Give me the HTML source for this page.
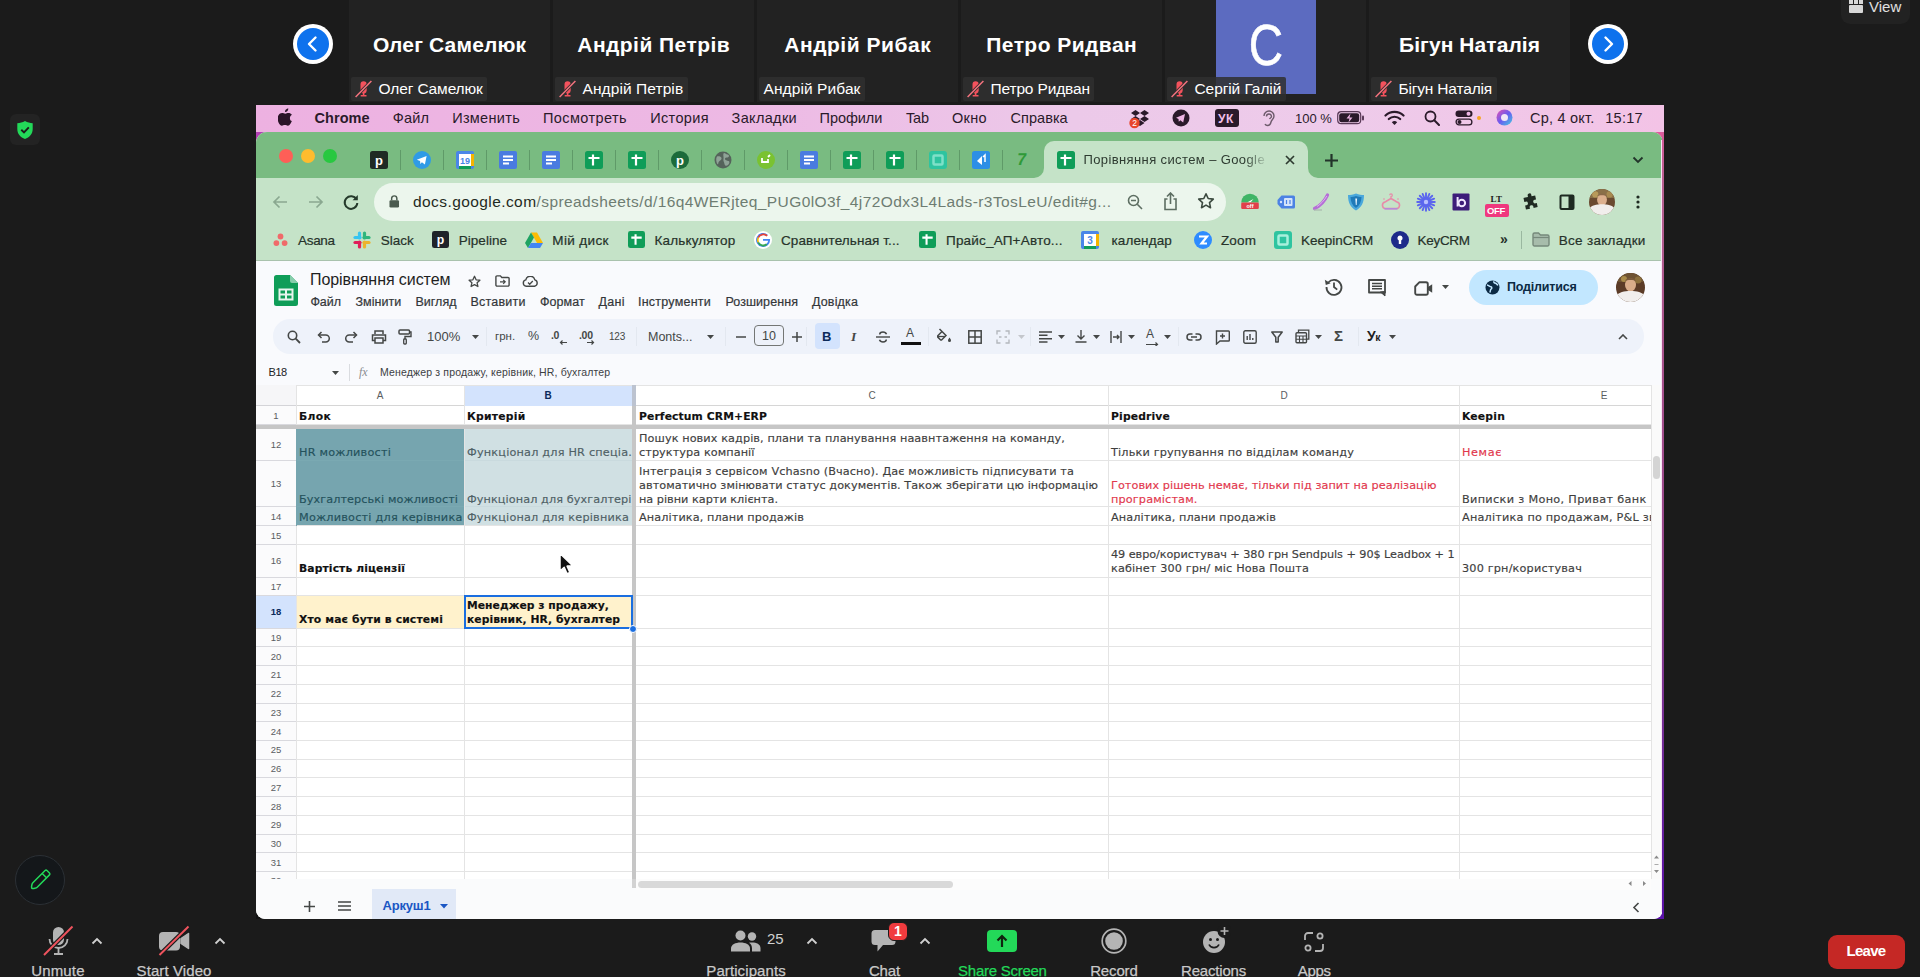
<!DOCTYPE html><html lang="uk"><head><meta charset="utf-8"><title>Zoom Meeting</title><style>

*{box-sizing:border-box;margin:0;padding:0}
html,body{width:1920px;height:977px;overflow:hidden;background:#1b1b1b}
body{position:relative;font-family:"Liberation Sans",sans-serif;color:#fff}
.a{position:absolute}
.t{position:absolute;white-space:nowrap;line-height:1}
.tile{position:absolute;top:0;height:102px;width:201px;background:#222}
.tile .big{position:absolute;left:0;right:0;top:33px;text-align:center;font-weight:bold;font-size:21px;line-height:24px;color:#fff;white-space:nowrap}
.tile .lbl{position:absolute;left:1.5px;top:77px;height:24px;background:rgba(48,48,48,.86);color:#fff;font-size:15.500px;line-height:24px;padding:0 4.500px 0 28px;white-space:nowrap;border-radius:2px}
.tile .lbl.nomic{padding-left:5px}
.tile .lbl svg{position:absolute;left:4px;top:2px}
.navb{position:absolute;width:40px;height:40px;border-radius:50%;background:#fff}
.navb i{position:absolute;left:4px;top:4px;width:32px;height:32px;border-radius:50%;background:#0e72ed;display:block}
.navb svg{position:absolute;left:4px;top:4px}
.c{font-family:"DejaVu Sans","Liberation Sans",sans-serif;-webkit-text-stroke:.15px currentColor}
.zl{position:absolute;white-space:nowrap;font-size:15px;line-height:18px;color:#c9c9c9;text-align:center;-webkit-text-stroke:.25px currentColor}

</style></head><body>
<div class="tile" style="left:349px">
<div class="big" style="letter-spacing:0.152px"><span style="margin-right:-0.152px">Олег Самелюк</span></div>
<div class="lbl" style="letter-spacing:-0.126px"><svg width="18" height="19" viewBox="0 0 18 19"><path d="M8.600 2.300a3.100 3.100 0 0 1 3.100 3.100v6.200a3.100 3.100 0 0 1-2.300 3v1.500h2.100v1.300H5.700v-1.300h2.100v-1.500a3.100 3.100 0 0 1-2.300-3V5.400a3.100 3.100 0 0 1 3.100-3.100z" fill="#f4525d"/><path d="M.6 18L16.400 2" stroke="#2e2e2e" stroke-width="3.200"/><path d="M.6 18L16.400 2" stroke="#f4737e" stroke-width="1.500"/></svg>Олег Самелюк</div>
</div>
<div class="tile" style="left:553px">
<div class="big" style="letter-spacing:0.451px"><span style="margin-right:-0.451px">Андрій Петрів</span></div>
<div class="lbl" style="letter-spacing:0.083px"><svg width="18" height="19" viewBox="0 0 18 19"><path d="M8.600 2.300a3.100 3.100 0 0 1 3.100 3.100v6.200a3.100 3.100 0 0 1-2.300 3v1.500h2.100v1.300H5.700v-1.300h2.100v-1.500a3.100 3.100 0 0 1-2.300-3V5.400a3.100 3.100 0 0 1 3.100-3.100z" fill="#f4525d"/><path d="M.6 18L16.400 2" stroke="#2e2e2e" stroke-width="3.200"/><path d="M.6 18L16.400 2" stroke="#f4737e" stroke-width="1.500"/></svg>Андрій Петрів</div>
</div>
<div class="tile" style="left:757px">
<div class="big" style="letter-spacing:0.528px"><span style="margin-right:-0.528px">Андрій Рибак</span></div>
<div class="lbl nomic" style="letter-spacing:0.092px">Андрій Рибак</div>
</div>
<div class="tile" style="left:961px">
<div class="big" style="letter-spacing:0.457px"><span style="margin-right:-0.457px">Петро Ридван</span></div>
<div class="lbl" style="letter-spacing:-0.156px"><svg width="18" height="19" viewBox="0 0 18 19"><path d="M8.600 2.300a3.100 3.100 0 0 1 3.100 3.100v6.200a3.100 3.100 0 0 1-2.300 3v1.500h2.100v1.300H5.700v-1.300h2.100v-1.500a3.100 3.100 0 0 1-2.300-3V5.400a3.100 3.100 0 0 1 3.100-3.100z" fill="#f4525d"/><path d="M.6 18L16.400 2" stroke="#2e2e2e" stroke-width="3.200"/><path d="M.6 18L16.400 2" stroke="#f4737e" stroke-width="1.500"/></svg>Петро Ридван</div>
</div>
<div class="tile" style="left:1165px">
<div class="a" style="left:51px;top:0;width:100px;height:94px;background:#5c6bc0"></div>
<div class="t" style="left:51px;width:100px;top:13px;text-align:center;font-size:58px;line-height:64px;color:#fff;transform:scaleX(.82);-webkit-text-stroke:.6px #fff">С</div>
<div class="lbl" style="letter-spacing:-0.082px"><svg width="18" height="19" viewBox="0 0 18 19"><path d="M8.600 2.300a3.100 3.100 0 0 1 3.100 3.100v6.200a3.100 3.100 0 0 1-2.300 3v1.500h2.100v1.300H5.700v-1.300h2.100v-1.500a3.100 3.100 0 0 1-2.300-3V5.400a3.100 3.100 0 0 1 3.100-3.100z" fill="#f4525d"/><path d="M.6 18L16.400 2" stroke="#2e2e2e" stroke-width="3.200"/><path d="M.6 18L16.400 2" stroke="#f4737e" stroke-width="1.500"/></svg>Сергій Галій</div>
</div>
<div class="tile" style="left:1369px">
<div class="big" style="letter-spacing:0.069px"><span style="margin-right:-0.069px">Бігун Наталія</span></div>
<div class="lbl" style="letter-spacing:-0.176px"><svg width="18" height="19" viewBox="0 0 18 19"><path d="M8.600 2.300a3.100 3.100 0 0 1 3.100 3.100v6.200a3.100 3.100 0 0 1-2.300 3v1.500h2.100v1.300H5.700v-1.300h2.100v-1.500a3.100 3.100 0 0 1-2.300-3V5.400a3.100 3.100 0 0 1 3.100-3.100z" fill="#f4525d"/><path d="M.6 18L16.400 2" stroke="#2e2e2e" stroke-width="3.200"/><path d="M.6 18L16.400 2" stroke="#f4737e" stroke-width="1.500"/></svg>Бігун Наталія</div>
</div>
<div class="navb" style="left:293px;top:24px"><i></i><svg width="32" height="32" viewBox="0 0 32 32"><path d="M18.5 9.5L12 16l6.5 6.5" fill="none" stroke="#fff" stroke-width="2.4" stroke-linecap="round" stroke-linejoin="round"/></svg></div>
<div class="navb" style="left:1588px;top:24px"><i></i><svg width="32" height="32" viewBox="0 0 32 32"><path d="M13.5 9.5L20 16l-6.5 6.5" fill="none" stroke="#fff" stroke-width="2.4" stroke-linecap="round" stroke-linejoin="round"/></svg></div>
<div class="a" style="left:1841px;top:-8px;width:69px;height:32px;border-radius:9px;background:#222"></div>
<svg class="a" style="left:1849px;top:0" width="14" height="14" viewBox="0 0 14 14"><rect x="0" y="5" width="14" height="8" rx="1" fill="#d8d8d8"/><rect x="0" y="0" width="4" height="4" fill="#d8d8d8"/><rect x="5" y="0" width="4" height="4" fill="#d8d8d8"/><rect x="10" y="0" width="4" height="4" fill="#d8d8d8"/></svg>
<div class="t" style="left:1869px;top:-2px;font-size:15px;line-height:18px;color:#e0e0e0">View</div>
<div class="a" style="left:10px;top:114px;width:30px;height:31px;border-radius:6px;background:#232323"></div>
<svg class="a" style="left:16px;top:120px" width="18" height="20" viewBox="0 0 18 20"><path d="M9 1C6.5 2.6 4 3 1.3 3.2V9c0 5 3.3 8.3 7.7 10 4.400-1.700 7.700-5 7.700-10V3.2C14 3 11.500 2.600 9 1z" fill="#23d959"/><path d="M5.300 9.800l2.700 2.600 4.800-5" fill="none" stroke="#1b1b1b" stroke-width="1.900"/></svg>
<div class="a" style="left:15px;top:855px;width:50px;height:50px;border-radius:50%;background:#14171a;border:1px solid #2b3035"></div>
<svg class="a" style="left:26px;top:866px" width="28" height="28" viewBox="0 0 28 28"><g transform="translate(14 14) scale(.88) rotate(45) translate(-14 -14)" fill="none" stroke="#23d959" stroke-width="1.700" stroke-linejoin="round"><path d="M12 .8h4a1.500 1.500 0 0 1 1.500 1.500V22c0 1.200-1.700 4.500-3.500 5.200-1.800-.7-3.500-4-3.500-5.200V2.300A1.500 1.500 0 0 1 12 .8z"/><path d="M10.500 7h7"/></g></svg>
<div class="a" style="left:256px;top:105px;width:1408px;height:814px;background:#121212"></div><div class="a" style="left:1650px;top:905px;width:14px;height:14px;background:#5a12a8"></div>
<div class="a" style="left:256px;top:130px;width:1408px;height:30px;background:linear-gradient(90deg,#b23fb4 0,#b23fb4 40px,#c86cb4 60%,#de5a9c 100%)"></div>
<div class="a" style="left:256px;top:105px;width:1408px;height:27px;background:linear-gradient(90deg,#edb1e1 0%,#edb9e4 35%,#ecc9e9 58%,#eecbea 78%,#f3c3e6 100%)"></div>
<svg class="a" style="left:278px;top:108px" width="15" height="18" viewBox="0 0 15 18"><path d="M10.300 0.400c.1 1-.3 1.900-.9 2.600-.6.700-1.500 1.200-2.400 1.100-.1-.9.300-1.900.9-2.500.6-.7 1.600-1.200 2.400-1.200zM13.900 13.100c-.4.900-.6 1.300-1.100 2.100-.7 1.100-1.700 2.500-3 2.500-1.100 0-1.400-.7-2.900-.7s-1.900.7-3 .7c-1.300 0-2.200-1.200-2.900-2.300C-.6 12.500-.8 9 .5 7.200 1.300 5.900 2.700 5.100 4 5.100c1.300 0 2.200.7 3.300.7 1.100 0 1.700-.7 3.300-.7 1.200 0 2.400.6 3.300 1.700-2.900 1.600-2.400 5.700 0 6.300z" fill="#2a1428"/></svg>
<div class="t" style="left:314.5px;top:108.5px;font-size:14.5px;line-height:18.5px;color:#2a1a2a;font-weight:bold;letter-spacing:0.069px;">Chrome</div>
<div class="t" style="left:392.8px;top:108.5px;font-size:14.5px;line-height:18.5px;color:#2a1a2a;letter-spacing:0.138px;">Файл</div>
<div class="t" style="left:452.2px;top:108.5px;font-size:14.5px;line-height:18.5px;color:#2a1a2a;letter-spacing:0.299px;">Изменить</div>
<div class="t" style="left:543px;top:108.5px;font-size:14.5px;line-height:18.5px;color:#2a1a2a;letter-spacing:0.407px;">Посмотреть</div>
<div class="t" style="left:650.2px;top:108.5px;font-size:14.5px;line-height:18.5px;color:#2a1a2a;letter-spacing:0.367px;">История</div>
<div class="t" style="left:731.6px;top:108.5px;font-size:14.5px;line-height:18.5px;color:#2a1a2a;letter-spacing:0.330px;">Закладки</div>
<div class="t" style="left:819.6px;top:108.5px;font-size:14.5px;line-height:18.5px;color:#2a1a2a;letter-spacing:-0.063px;">Профили</div>
<div class="t" style="left:906px;top:108.5px;font-size:14.5px;line-height:18.5px;color:#2a1a2a;letter-spacing:-0.193px;">Tab</div>
<div class="t" style="left:952px;top:108.5px;font-size:14.5px;line-height:18.5px;color:#2a1a2a;letter-spacing:0.276px;">Окно</div>
<div class="t" style="left:1010.5px;top:108.5px;font-size:14.5px;line-height:18.5px;color:#2a1a2a;letter-spacing:0.046px;">Справка</div>
<svg class="a" style="left:1129px;top:109px" width="22" height="20" viewBox="0 0 22 20"><g fill="#2a1a2a"><path d="M6.500 1L2 4l4.500 3L11 4zM15.500 1L11 4l4.500 3L20 4zM2 10l4.500 3L11 10 6.500 7zM15.500 7L11 10l4.500 3L20 10zM6.500 14l4.500 3 4.500-3L11 11z"/></g><circle cx="5.500" cy="14" r="5.200" fill="#e8452c"/><text x="5.500" y="17" font-size="8.500" text-anchor="middle" fill="#fff" font-family="Liberation Sans,sans-serif">2</text></svg>
<svg class="a" style="left:1172px;top:109px" width="18" height="18" viewBox="0 0 18 18"><circle cx="9" cy="9" r="8.500" fill="#2a1a2a"/><path d="M4 8.800l9-3.800-1.800 8.500-2.900-2.300-1.500 1.600-.3-2.700z" fill="#eeb6e4"/></svg>
<div class="a" style="left:1215px;top:109px;width:24px;height:18px;border-radius:3px;background:#2a1a2a"></div>
<div class="t" style="left:1218px;top:111px;font-size:12px;line-height:16px;color:#f0bfe8;font-weight:bold;letter-spacing:.5px;">УК</div>
<svg class="a" style="left:1262px;top:108px" width="14" height="20" viewBox="0 0 14 20"><path d="M2 8a5 5 0 0 1 10 0c0 3-2.500 3.500-3 6-.4 2-1.500 3.500-3.500 3.500-1 0-2-.5-2.500-1.500M4.500 8.500a2.500 2.500 0 0 1 5 0c0 1.300-1.500 1.500-2 2.500" fill="none" stroke="#6d5a6b" stroke-width="1.400"/></svg>
<div class="t" style="left:1295px;top:110px;font-size:13px;line-height:17px;color:#2a1a2a;">100 %</div>
<svg class="a" style="left:1337px;top:111px" width="28" height="14" viewBox="0 0 28 14"><rect x="0.700" y="0.700" width="23" height="12" rx="3.500" fill="none" stroke="#5a3a58" stroke-width="1.200"/><rect x="2.200" y="2.200" width="20" height="9" rx="2.200" fill="#2a1a2a"/><path d="M13.500 2.500l-4 5h3l-1 4 4-5h-3z" fill="#eeb6e4"/><rect x="25" y="4.500" width="2" height="5" rx="1" fill="#5a3a58"/></svg>
<svg class="a" style="left:1384px;top:110px" width="21" height="16" viewBox="0 0 21 16"><g fill="none" stroke="#2a1a2a" stroke-width="2.200" stroke-linecap="round"><path d="M1.500 5.500a13 13 0 0 1 18 0"/><path d="M4.800 9a8.300 8.300 0 0 1 11.400 0"/></g><path d="M7.800 12.200a4 4 0 0 1 5.400 0L10.500 15z" fill="#2a1a2a"/></svg>
<svg class="a" style="left:1424px;top:110px" width="16" height="16" viewBox="0 0 16 16"><circle cx="6.500" cy="6.500" r="5" fill="none" stroke="#2a1a2a" stroke-width="1.800"/><path d="M10.300 10.300L15 15" stroke="#2a1a2a" stroke-width="2" stroke-linecap="round"/></svg>
<svg class="a" style="left:1455px;top:110px" width="18" height="16" viewBox="0 0 18 16"><rect x="0.500" y="0.500" width="17" height="6.500" rx="3.200" fill="#2a1a2a"/><circle cx="13.500" cy="3.800" r="2" fill="#eeb6e4"/><rect x="1.100" y="9.100" width="15.800" height="5.800" rx="2.900" fill="none" stroke="#2a1a2a" stroke-width="1.300"/><circle cx="4.500" cy="12" r="2" fill="#2a1a2a"/></svg>
<div class="a" style="left:1477px;top:116px;width:4px;height:4px;border-radius:50%;background:#f5a623"></div>
<svg class="a" style="left:1496px;top:109px" width="17" height="17" viewBox="0 0 17 17"><defs><linearGradient id="sg" x1="0" y1="0" x2="1" y2="1"><stop offset="0" stop-color="#e84fb0"/><stop offset=".5" stop-color="#6a5cf0"/><stop offset="1" stop-color="#3fd0e0"/></linearGradient></defs><circle cx="8.500" cy="8.500" r="8" fill="url(#sg)"/><circle cx="8.500" cy="8.500" r="3.500" fill="#f3e6f6"/></svg>
<div class="t" style="left:1530px;top:108.5px;font-size:14.5px;line-height:18.5px;color:#2a1a2a;letter-spacing:0.208px;">Ср, 4 окт.</div>
<div class="t" style="left:1605.3px;top:108.5px;font-size:14.5px;line-height:18.5px;color:#2a1a2a;letter-spacing:0.263px;">15:17</div>
<div class="a" style="left:256px;top:132px;width:1407px;height:787px;border-radius:11px 11px 9px 9px;background:#f9fafd;overflow:hidden"><div class="a" style="left:0;top:0;width:1407px;height:47px;background:#79bb81"></div><div class="a" style="left:0;top:46px;width:1407px;height:83px;background:#c5e3c8;border-bottom:1px solid #a9c2ad"></div></div>
<div class="a" style="left:279px;top:149px;width:14px;height:14px;border-radius:50%;background:#fe5f57"></div>
<div class="a" style="left:301px;top:149px;width:14px;height:14px;border-radius:50%;background:#febc2e"></div>
<div class="a" style="left:323px;top:149px;width:14px;height:14px;border-radius:50%;background:#28c840"></div>
<svg class="a" style="left:370px;top:151px" width="18" height="18" viewBox="0 0 18 18"><rect width="18" height="18" rx="2.500" fill="#1f2a24"/><text x="9" y="13.500" text-anchor="middle" font-family="Liberation Sans,sans-serif" font-weight="bold" font-size="13" fill="#fff">p</text></svg>
<svg class="a" style="left:413px;top:151px" width="18" height="18" viewBox="0 0 18 18"><circle cx="9" cy="9" r="9" fill="#2f9be6"/><path d="M3.800 8.800l9.800-3.900-1.700 8.700-3-2.300-1.600 1.600-.2-2.800z" fill="#fff"/></svg>
<svg class="a" style="left:456px;top:151px" width="18" height="18" viewBox="0 0 18 18"><rect width="18" height="18" rx="2" fill="#4a86e8"/><rect x="3" y="3" width="12" height="12" fill="#fff"/><rect x="15" y="3" width="3" height="12" fill="#f4b400"/><rect x="3" y="15" width="12" height="3" fill="#0f9d58"/><text x="9" y="13" font-size="9" font-weight="bold" text-anchor="middle" fill="#4a86e8" font-family="Liberation Sans,sans-serif">19</text></svg>
<svg class="a" style="left:499px;top:151px" width="18" height="18" viewBox="0 0 18 18"><rect width="18" height="18" rx="2" fill="#4a7be0"/><path d="M4 5.500h10M4 9h10M4 12.500h6" stroke="#fff" stroke-width="1.800"/></svg>
<svg class="a" style="left:542px;top:151px" width="18" height="18" viewBox="0 0 18 18"><rect width="18" height="18" rx="2" fill="#4a7be0"/><path d="M4 5.500h10M4 9h10M4 12.500h6" stroke="#fff" stroke-width="1.800"/></svg>
<svg class="a" style="left:585px;top:151px" width="18" height="18" viewBox="0 0 18 18"><rect width="18" height="18" rx="2.500" fill="#0f9d58"/><path d="M3.500 7h11M8 3.500v11" stroke="#fff" stroke-width="2.200"/></svg>
<svg class="a" style="left:628px;top:151px" width="18" height="18" viewBox="0 0 18 18"><rect width="18" height="18" rx="2.500" fill="#0f9d58"/><path d="M3.500 7h11M8 3.500v11" stroke="#fff" stroke-width="2.200"/></svg>
<svg class="a" style="left:671px;top:151px" width="18" height="18" viewBox="0 0 18 18"><circle cx="9" cy="9" r="9" fill="#1c6b3a"/><text x="9" y="13.500" text-anchor="middle" font-family="Liberation Sans,sans-serif" font-weight="bold" font-size="13" fill="#fff">p</text></svg>
<svg class="a" style="left:714px;top:151px" width="18" height="18" viewBox="0 0 18 18"><circle cx="9" cy="9" r="8.500" fill="#55635b"/><path d="M3 5.500c2-.5 4 0 4.500 1.500S6 9.500 5 10.500 4.500 14 3.500 13 1.500 8 3 5.500zM10 2c1.500 0 2 1.500 3.500 1.500s2 1.500 1 2.500-3 0-3.500 1.500S13.500 10 14.500 10s1.500 2 0 3.500S11 15.500 10.500 13 9 10 9.500 8 8.500 3 10 2z" fill="#8fa397"/></svg>
<svg class="a" style="left:757px;top:151px" width="18" height="18" viewBox="0 0 18 18"><circle cx="9" cy="9" r="9" fill="#7ac231"/><path d="M5 7v4h6V8M11 6l2-2" stroke="#fff" stroke-width="1.800" fill="none"/></svg>
<svg class="a" style="left:800px;top:151px" width="18" height="18" viewBox="0 0 18 18"><rect width="18" height="18" rx="2" fill="#4a7be0"/><path d="M4 5.500h10M4 9h10M4 12.500h6" stroke="#fff" stroke-width="1.800"/></svg>
<svg class="a" style="left:843px;top:151px" width="18" height="18" viewBox="0 0 18 18"><rect width="18" height="18" rx="2.500" fill="#0f9d58"/><path d="M3.500 7h11M8 3.500v11" stroke="#fff" stroke-width="2.200"/></svg>
<svg class="a" style="left:886px;top:151px" width="18" height="18" viewBox="0 0 18 18"><rect width="18" height="18" rx="2.500" fill="#0f9d58"/><path d="M3.500 7h11M8 3.500v11" stroke="#fff" stroke-width="2.200"/></svg>
<svg class="a" style="left:929px;top:151px" width="18" height="18" viewBox="0 0 18 18"><rect width="18" height="18" rx="3" fill="#2ec4a0"/><rect x="4.500" y="4.500" width="9" height="9" rx="1" fill="none" stroke="#7fe0c8" stroke-width="2.500"/></svg>
<svg class="a" style="left:972px;top:151px" width="18" height="18" viewBox="0 0 18 18"><rect width="18" height="18" rx="2.500" fill="#2d8fe6"/><path d="M5 10l5-5v9l-2.500-2z" fill="#fff"/><path d="M11 6l2-2v7" stroke="#fff" stroke-width="1.500" fill="none"/></svg>
<div class="t" style="left:1017px;top:149px;font-size:17px;line-height:22px;font-weight:bold;color:#2f9a38;transform:skewX(-8deg)">7</div>
<div class="a" style="left:400px;top:150px;width:1px;height:20px;background:#5f9a68"></div>
<div class="a" style="left:443px;top:150px;width:1px;height:20px;background:#5f9a68"></div>
<div class="a" style="left:486px;top:150px;width:1px;height:20px;background:#5f9a68"></div>
<div class="a" style="left:529px;top:150px;width:1px;height:20px;background:#5f9a68"></div>
<div class="a" style="left:572px;top:150px;width:1px;height:20px;background:#5f9a68"></div>
<div class="a" style="left:615px;top:150px;width:1px;height:20px;background:#5f9a68"></div>
<div class="a" style="left:658px;top:150px;width:1px;height:20px;background:#5f9a68"></div>
<div class="a" style="left:701px;top:150px;width:1px;height:20px;background:#5f9a68"></div>
<div class="a" style="left:744px;top:150px;width:1px;height:20px;background:#5f9a68"></div>
<div class="a" style="left:787px;top:150px;width:1px;height:20px;background:#5f9a68"></div>
<div class="a" style="left:830px;top:150px;width:1px;height:20px;background:#5f9a68"></div>
<div class="a" style="left:873px;top:150px;width:1px;height:20px;background:#5f9a68"></div>
<div class="a" style="left:916px;top:150px;width:1px;height:20px;background:#5f9a68"></div>
<div class="a" style="left:959px;top:150px;width:1px;height:20px;background:#5f9a68"></div>
<div class="a" style="left:1002px;top:150px;width:1px;height:20px;background:#5f9a68"></div>
<div class="a" style="left:1044px;top:141px;width:264px;height:37px;border-radius:10px 10px 0 0;background:#c5e3c8"></div>
<svg class="a" style="left:1034px;top:168px" width="10" height="10" viewBox="0 0 10 10"><path d="M10 0v10H0A10 10 0 0 0 10 0z" fill="#c5e3c8"/></svg>
<svg class="a" style="left:1308px;top:168px" width="10" height="10" viewBox="0 0 10 10"><path d="M0 0v10h10A10 10 0 0 1 0 0z" fill="#c5e3c8"/></svg>
<svg class="a" style="left:1057px;top:151px" width="18" height="18" viewBox="0 0 18 18"><rect width="18" height="18" rx="2.500" fill="#0f9d58"/><path d="M3.500 7h11M8 3.500v11" stroke="#fff" stroke-width="2.200"/></svg>
<div class="t" style="left:1083.500px;top:151px;font-size:13px;line-height:18px;color:#2d3a30;width:187px;overflow:hidden;letter-spacing:0.387px;-webkit-mask-image:linear-gradient(90deg,#000 86%,transparent 99%);mask-image:linear-gradient(90deg,#000 86%,transparent 99%)">Порівняння систем – Google Таблиці</div>
<svg class="a" style="left:1284px;top:154px" width="12" height="12" viewBox="0 0 12 12"><path d="M2 2l8 8M10 2l-8 8" stroke="#2d3a30" stroke-width="1.700"/></svg>
<svg class="a" style="left:1324px;top:153px" width="15" height="15" viewBox="0 0 15 15"><path d="M7.500 1v13M1 7.500h13" stroke="#22332a" stroke-width="2.200"/></svg>
<svg class="a" style="left:1632px;top:156px" width="12" height="8" viewBox="0 0 12 8"><path d="M1.500 1.500L6 6l4.500-4.500" fill="none" stroke="#22332a" stroke-width="1.800"/></svg>
<svg class="a" style="left:272px;top:194px" width="16" height="16" viewBox="0 0 16 16"><path d="M15 8H2M7.500 2.500L2 8l5.500 5.500" fill="none" stroke="#8aa890" stroke-width="1.700"/></svg>
<svg class="a" style="left:308px;top:194px" width="16" height="16" viewBox="0 0 16 16"><path d="M1 8h13M8.500 2.500L14 8l-5.500 5.500" fill="none" stroke="#8aa890" stroke-width="1.700"/></svg>
<svg class="a" style="left:342px;top:193px" width="18" height="18" viewBox="0 0 18 18"><path d="M14.500 6.500A6.300 6.300 0 1 0 15.300 10" fill="none" stroke="#253a2b" stroke-width="2"/><path d="M15.800 2v5.200h-5.200z" fill="#253a2b"/></svg>
<div class="a" style="left:374px;top:183px;width:852px;height:38px;border-radius:19px;background:#ecf6ed"></div>
<svg class="a" style="left:389px;top:195px" width="10.500" height="13" viewBox="0 0 12 15"><rect x="0.500" y="6" width="11" height="8.500" rx="1.500" fill="#4a5a4e"/><path d="M3 6V4a3 3 0 0 1 6 0v2" fill="none" stroke="#4a5a4e" stroke-width="1.700"/></svg>
<div class="t" style="left:413px;top:192px;font-size:15.500px;line-height:20px;color:#6e7d72;letter-spacing:0.410px"><span style="color:#1f2a22;letter-spacing:0.421px">docs.google.com</span>/spreadsheets/d/16q4WERjteq_PUG0lO3f_4j72Odx3L4Lads-r3TosLeU/edit#g...</div>
<svg class="a" style="left:1127px;top:194px" width="16" height="16" viewBox="0 0 16 16"><circle cx="6.500" cy="6.500" r="5" fill="none" stroke="#5d6e62" stroke-width="1.600"/><path d="M10.300 10.300L15 15M4 6.500h5" stroke="#5d6e62" stroke-width="1.600"/></svg>
<svg class="a" style="left:1163px;top:192px" width="15" height="19" viewBox="0 0 15 19"><path d="M4.500 7H2v10.500h11V7h-2.500M7.500 12V1.500M4 4.500l3.500-3.500L11 4.500" fill="none" stroke="#5d6e62" stroke-width="1.600"/></svg>
<svg class="a" style="left:1197px;top:192px" width="18" height="18" viewBox="0 0 18 18"><path d="M9 1.800l2.200 4.700 5.100.6-3.800 3.500 1 5.100L9 13.100l-4.500 2.600 1-5.100L1.700 7.100l5.100-.6z" fill="none" stroke="#3c4a40" stroke-width="1.600" stroke-linejoin="round"/></svg>
<svg class="a" style="left:1240px;top:192px" width="20" height="20" viewBox="0 0 20 20"><path d="M1.200 10.500a8.800 8.800 0 0 1 17.600 0z" fill="#3fb566"/><path d="M7 10.500l6.500-3.500-3 3.500z" fill="#fff"/><rect x="1.200" y="10.500" width="17.600" height="6.500" rx="1.200" fill="#e0404a"/><text x="10" y="16" font-size="5.500" font-weight="bold" text-anchor="middle" fill="#fff" font-family="Liberation Sans,sans-serif">off</text></svg>
<svg class="a" style="left:1276px;top:192px" width="20" height="20" viewBox="0 0 20 20"><path d="M5.500 3.500h12a1.500 1.500 0 0 1 1.500 1.500v10a1.500 1.500 0 0 1-1.500 1.500h-12L1.500 12V8z" fill="#4c82e4"/><rect x="8" y="6" width="8.500" height="8" rx="1" fill="#d6e4fb"/><circle cx="5" cy="10" r="1.200" fill="#d6e4fb"/><path d="M10.500 8v4M14 8v4" stroke="#4c82e4" stroke-width="1.200"/></svg>
<svg class="a" style="left:1311px;top:192px" width="20" height="20" viewBox="0 0 20 20"><path d="M3.500 16.500C8 14.500 13.500 9.500 16.500 3" stroke="#b56fd6" stroke-width="3.200" fill="none" stroke-linecap="round"/><path d="M6 14.500C10 12 13.500 8 15.800 4" stroke="#dcaef0" stroke-width="1" fill="none"/><path d="M3 18h8" stroke="#a9b8ad" stroke-width="1.200"/></svg>
<svg class="a" style="left:1346px;top:192px" width="20" height="20" viewBox="0 0 20 20"><path d="M10 1.500c3 1.200 5.500 1.500 8 1.500 0 7.500-2.500 12.500-8 15.500C4.500 15.500 2 10.500 2 3c2.500 0 5-.3 8-1.500z" fill="#4aa8dc"/><path d="M10 4c2 .8 3.800 1 5.500 1.100-.2 5.200-1.900 8.700-5.500 11-3.600-2.300-5.300-5.800-5.500-11C6.200 5 8 4.800 10 4z" fill="#1f7ab8"/><path d="M9.300 6.500h1.800l-.5 6.500h-.8z" fill="#e8f6ff"/></svg>
<svg class="a" style="left:1381px;top:192px" width="20" height="20" viewBox="0 0 20 20"><path d="M4.500 16.500a3.300 3.300 0 0 1-.5-6.500c1-.2 1.500-1 2.500-1.500L10 6.500l3.500 2c1 .5 1.500 1.300 2.500 1.500a3.300 3.300 0 0 1-.5 6.500z" fill="none" stroke="#e88aa8" stroke-width="1.600" stroke-linejoin="round"/><path d="M10 6.500V4.500a1.300 1.300 0 1 0-1.300-1.300" fill="none" stroke="#e88aa8" stroke-width="1.200"/><path d="M3.500 16.800h13" stroke="#b78ad8" stroke-width="1.600"/><circle cx="3" cy="7" r=".8" fill="#e88aa8"/><circle cx="17" cy="7" r=".8" fill="#e88aa8"/></svg>
<svg class="a" style="left:1416px;top:192px" width="20" height="20" viewBox="0 0 20 20"><g stroke="#5b66ee" stroke-width="1.900" stroke-linecap="round"><path d="M10 10L18.80 10.00"/><path d="M10 10L18.13 13.37"/><path d="M10 10L16.22 16.22"/><path d="M10 10L13.37 18.13"/><path d="M10 10L10.00 18.80"/><path d="M10 10L6.63 18.13"/><path d="M10 10L3.78 16.22"/><path d="M10 10L1.87 13.37"/><path d="M10 10L1.20 10.00"/><path d="M10 10L1.87 6.63"/><path d="M10 10L3.78 3.78"/><path d="M10 10L6.63 1.87"/><path d="M10 10L10.00 1.20"/><path d="M10 10L13.37 1.87"/><path d="M10 10L16.22 3.78"/><path d="M10 10L18.13 6.63"/></g><circle cx="10" cy="10" r="4.800" fill="#5b66ee"/><circle cx="10" cy="10" r="2.200" fill="#b9c0ff"/></svg>
<svg class="a" style="left:1451px;top:192px" width="20" height="20" viewBox="0 0 20 20"><rect x="1.500" y="1.500" width="17" height="17" rx="1" fill="#3d1c7a"/><circle cx="10.800" cy="11" r="3.300" fill="none" stroke="#f0e6ff" stroke-width="2"/><path d="M6.600 5v9.500" stroke="#f0e6ff" stroke-width="2"/></svg>
<div class="t" style="left:1490.500px;top:194px;font-size:9px;line-height:10px;font-weight:bold;color:#1c1c1c;font-family:'Liberation Serif',serif;letter-spacing:.3px">LT</div>
<div class="a" style="left:1485px;top:204px;width:24px;height:13px;border-radius:2px;background:#f0377e"></div>
<div class="t" style="left:1487px;top:205px;font-size:9.500px;line-height:11px;color:#fff;font-weight:bold;letter-spacing:-.3px">OFF</div>
<svg class="a" style="left:1521px;top:192px" width="20" height="20" viewBox="0 0 20 20"><path d="M8 2.500a2 2 0 0 1 4 0V4h4v4.500h-1.500a2 2 0 0 0 0 4H16V17h-4.500v-1.500a2 2 0 0 0-4 0V17H3v-4.500h1.500a2 2 0 0 0 0-4H3V4h5z" fill="#1f2a22" transform="rotate(-12 10 10) scale(.92) translate(.8 .8)"/></svg>
<svg class="a" style="left:1557px;top:192px" width="20" height="20" viewBox="0 0 20 20"><rect x="3.500" y="3.500" width="13" height="13.500" rx="1" fill="none" stroke="#1f2a22" stroke-width="2"/><rect x="11.500" y="3.500" width="5" height="13.500" fill="#1f2a22"/></svg>
<svg class="a" style="left:1589px;top:189px" width="26" height="26" viewBox="0 0 29 29"><defs><clipPath id="avc2"><circle cx="14.500" cy="14.500" r="14.500"/></clipPath></defs><g clip-path="url(#avc2)"><rect width="29" height="29" fill="#6a4a30"/><rect x="0" y="0" width="29" height="10" fill="#8a7048"/><circle cx="7" cy="6" r="3.500" fill="#b89a5a"/><circle cx="23" cy="6" r="3.500" fill="#a88a50"/><ellipse cx="14.500" cy="12" rx="5.500" ry="6.500" fill="#dcb08e"/><path d="M9 8c1-4 10-4 11 0-2-1.500-9-1.500-11 0z" fill="#8a6a4a"/><path d="M0 29v-7c3-4 8-5 14.500-5s11.500 1 14.500 5v7z" fill="#f1eeec"/></g></svg>
<svg class="a" style="left:1635.500px;top:195px" width="4" height="14" viewBox="0 0 4 14"><circle cx="2" cy="2" r="1.600" fill="#1f2a22"/><circle cx="2" cy="7" r="1.600" fill="#1f2a22"/><circle cx="2" cy="12" r="1.600" fill="#1f2a22"/></svg>
<svg class="a" style="left:273px;top:233px" width="15" height="14" viewBox="0 0 17 16"><circle cx="8.500" cy="4" r="3.300" fill="#f06a6a"/><circle cx="3.800" cy="11.500" r="3.300" fill="#f06a6a"/><circle cx="13.200" cy="11.500" r="3.300" fill="#f06a6a"/></svg>
<div class="t" style="left:298px;top:233px;font-size:13.500px;line-height:16px;color:#26322a;-webkit-text-stroke:.2px #26322a;letter-spacing:-0.296px">Asana</div>
<svg class="a" style="left:353px;top:231px" width="18" height="18" viewBox="0 0 18 18"><g stroke-width="3.200" stroke-linecap="round"><path d="M6.500 2v5" stroke="#36c5f0"/><path d="M2 6.500h5" stroke="#36c5f0"/><path d="M11.500 2v5" stroke="#2eb67d"/><path d="M11 6.500h5" stroke="#2eb67d"/><path d="M6.500 11v5" stroke="#e01e5a"/><path d="M2 11.500h5" stroke="#e01e5a"/><path d="M11.500 11v5" stroke="#ecb22e"/><path d="M11 11.500h5" stroke="#ecb22e"/></g></svg>
<div class="t" style="left:380.7px;top:233px;font-size:13.500px;line-height:16px;color:#26322a;-webkit-text-stroke:.2px #26322a;letter-spacing:-0.002px">Slack</div>
<svg class="a" style="left:432px;top:231px" width="17" height="17" viewBox="0 0 18 18"><rect width="18" height="18" rx="2.500" fill="#1f2329"/><text x="9" y="13.500" text-anchor="middle" font-family="Liberation Sans,sans-serif" font-weight="bold" font-size="13" fill="#fff">p</text></svg>
<div class="t" style="left:458.8px;top:233px;font-size:13.500px;line-height:16px;color:#26322a;-webkit-text-stroke:.2px #26322a;letter-spacing:0.021px">Pipeline</div>
<svg class="a" style="left:525px;top:232px" width="18" height="16" viewBox="0 0 18 16"><path d="M6 0.500h6l6 10.500h-6z" fill="#fbbc04"/><path d="M6 0.500L0 11l3 5 6-10.500z" fill="#1ea362"/><path d="M3 16h12l3-5H6z" fill="#4285f4"/></svg>
<div class="t" style="left:552.3px;top:233px;font-size:13.500px;line-height:16px;color:#26322a;-webkit-text-stroke:.2px #26322a;letter-spacing:0.361px">Мій диск</div>
<svg class="a" style="left:628px;top:231px" width="17" height="17" viewBox="0 0 18 18"><rect width="18" height="18" rx="2.500" fill="#0f9d58"/><path d="M3.500 7h11M8 3.500v11" stroke="#fff" stroke-width="2.200"/></svg>
<div class="t" style="left:654.6px;top:233px;font-size:13.500px;line-height:16px;color:#26322a;-webkit-text-stroke:.2px #26322a;letter-spacing:0.152px">Калькулятор</div>
<svg class="a" style="left:754px;top:231px" width="18" height="18" viewBox="0 0 18 18"><circle cx="9" cy="9" r="9" fill="#fff"/><path d="M9 3.800A5.200 5.200 0 1 0 14.200 9.800H9V8h7a7 7 0 1 1-2.200-4.200l-1.400 1.400A5.200 5.200 0 0 0 9 3.800z" fill="#4285f4"/><path d="M3.500 6.300A6.500 6.500 0 0 1 13.800 4.200l-1.400 1.400A4.700 4.700 0 0 0 5 7z" fill="#ea4335"/><path d="M3.500 11.700A6.500 6.500 0 0 1 3.500 6.300L5 7a4.700 4.700 0 0 0 0 4z" fill="#fbbc04"/><path d="M3.500 11.700L5 11a4.700 4.700 0 0 0 7 1.600l1.500 1.400a6.500 6.500 0 0 1-10-2.300z" fill="#34a853"/></svg>
<div class="t" style="left:781px;top:233px;font-size:13.500px;line-height:16px;color:#26322a;-webkit-text-stroke:.2px #26322a;letter-spacing:0.095px">Сравнительная т...</div>
<svg class="a" style="left:919px;top:231px" width="17" height="17" viewBox="0 0 18 18"><rect width="18" height="18" rx="2.500" fill="#0f9d58"/><path d="M3.500 7h11M8 3.500v11" stroke="#fff" stroke-width="2.200"/></svg>
<div class="t" style="left:946px;top:233px;font-size:13.500px;line-height:16px;color:#26322a;-webkit-text-stroke:.2px #26322a;letter-spacing:0.192px">Прайс_АП+Авто...</div>
<svg class="a" style="left:1081px;top:231px" width="18" height="18" viewBox="0 0 18 18"><rect width="18" height="18" rx="2" fill="#4a86e8"/><rect x="3" y="3" width="12" height="12" fill="#fff"/><rect x="15" y="3" width="3" height="12" fill="#f4b400"/><rect x="3" y="15" width="12" height="3" fill="#0f9d58"/><text x="9" y="13" font-size="10" font-weight="bold" text-anchor="middle" fill="#4a86e8" font-family="Liberation Sans,sans-serif">3</text></svg>
<div class="t" style="left:1111.4px;top:233px;font-size:13.500px;line-height:16px;color:#26322a;-webkit-text-stroke:.2px #26322a;letter-spacing:0.144px">календар</div>
<svg class="a" style="left:1194px;top:231px" width="18" height="18" viewBox="0 0 18 18"><circle cx="9" cy="9" r="9" fill="#2d8cff"/><path d="M5 5.500h8l-5.500 7H13" fill="none" stroke="#fff" stroke-width="2.200"/></svg>
<div class="t" style="left:1221px;top:233px;font-size:13.500px;line-height:16px;color:#26322a;-webkit-text-stroke:.2px #26322a;letter-spacing:0.123px">Zoom</div>
<svg class="a" style="left:1274px;top:231px" width="18" height="18" viewBox="0 0 18 18"><rect width="18" height="18" rx="3" fill="#2ec4a0"/><rect x="4.500" y="4.500" width="9" height="9" rx="1" fill="none" stroke="#a8f0dc" stroke-width="2.500"/></svg>
<div class="t" style="left:1301px;top:233px;font-size:13.500px;line-height:16px;color:#26322a;-webkit-text-stroke:.2px #26322a;letter-spacing:-0.053px">KeepinCRM</div>
<svg class="a" style="left:1391px;top:231px" width="18" height="18" viewBox="0 0 18 18"><circle cx="9" cy="9" r="9" fill="#1d2a8a"/><path d="M9 4.500a2.600 2.600 0 0 1 1.200 4.900V13H7.800V9.400A2.600 2.600 0 0 1 9 4.500z" fill="#fff"/></svg>
<div class="t" style="left:1417.6px;top:233px;font-size:13.500px;line-height:16px;color:#26322a;-webkit-text-stroke:.2px #26322a;letter-spacing:-0.318px">KeyCRM</div>
<div class="t" style="left:1500px;top:231px;font-size:14px;line-height:16px;font-weight:bold;color:#26322a">»</div>
<div class="a" style="left:1521px;top:231px;width:1px;height:18px;background:#9ab8a0"></div>
<svg class="a" style="left:1532px;top:232px" width="18" height="15" viewBox="0 0 18 15"><path d="M1 2.500a1.500 1.500 0 0 1 1.500-1.500h4l2 2h7A1.500 1.500 0 0 1 17 4.500v8a1.500 1.500 0 0 1-1.500 1.500h-13A1.500 1.500 0 0 1 1 12.500z" fill="#a7bcab" stroke="#76897b" stroke-width="1.400"/><path d="M1 5.500h16" stroke="#76897b" stroke-width="1.200"/></svg>
<div class="t" style="left:1558.8px;top:233px;font-size:13.500px;line-height:16px;color:#26322a;-webkit-text-stroke:.2px #26322a;letter-spacing:0.285px">Все закладки</div>
<svg class="a" style="left:274px;top:275px" width="24" height="31" viewBox="0 0 24 31"><path d="M2.500 0H16l8 8v20.500a2.500 2.500 0 0 1-2.500 2.500h-19A2.500 2.500 0 0 1 0 28.500v-26A2.500 2.500 0 0 1 2.500 0z" fill="#0f9d58"/><path d="M16 0l8 8h-6a2 2 0 0 1-2-2z" fill="#87ceac"/><path d="M5.500 14.500h13v10h-13zM5.500 19.500h13M12 14.500v10" fill="none" stroke="#e8f5ee" stroke-width="2"/></svg>
<div class="t" style="left:310px;top:270px;font-size:16px;line-height:20px;color:#1f1f1f;letter-spacing:-.07px">Порівняння систем</div>
<svg class="a" style="left:468.0px;top:274.5px;" width="13" height="13" viewBox="0 0 13 13"><path d="M6.500 1.300l1.600 3.500 3.800.4-2.800 2.600.8 3.700L6.500 9.600l-3.400 1.900.8-3.700L1.100 5.200l3.800-.4z" fill="none" stroke="#444746" stroke-width="1.300" stroke-linejoin="round"/></svg>
<svg class="a" style="left:495.0px;top:275.0px;" width="15" height="12" viewBox="0 0 15 12"><path d="M.9 2A1.100 1.100 0 0 1 2 .9h3.400l1.400 1.600h6.200A1.100 1.100 0 0 1 14.100 3.600V10a1.100 1.100 0 0 1-1.100 1.100H2A1.100 1.100 0 0 1 .9 10z" fill="none" stroke="#444746" stroke-width="1.400"/><path d="M5 6.800h5M8.200 4.800l2 2-2 2" fill="none" stroke="#444746" stroke-width="1.200"/></svg>
<svg class="a" style="left:522.0px;top:275.5px;" width="17" height="11" viewBox="0 0 17 11"><path d="M4.200 10.200A3.200 3.200 0 0 1 3.800 3.900 4.600 4.600 0 0 1 12.800 3.800 3.300 3.300 0 0 1 12.600 10.200z" fill="none" stroke="#444746" stroke-width="1.400"/><path d="M6 6.500l1.700 1.700L10.800 5" fill="none" stroke="#444746" stroke-width="1.300"/></svg>
<div class="t mn" style="left:310.4px;top:294px;font-size:12.500px;line-height:16px;color:#333639;letter-spacing:-0.033px;-webkit-text-stroke:.2px #333639">Файл</div>
<div class="t mn" style="left:355.4px;top:294px;font-size:12.500px;line-height:16px;color:#333639;letter-spacing:0.069px;-webkit-text-stroke:.2px #333639">Змінити</div>
<div class="t mn" style="left:415.4px;top:294px;font-size:12.500px;line-height:16px;color:#333639;letter-spacing:0.040px;-webkit-text-stroke:.2px #333639">Вигляд</div>
<div class="t mn" style="left:470.4px;top:294px;font-size:12.500px;line-height:16px;color:#333639;letter-spacing:0.243px;-webkit-text-stroke:.2px #333639">Вставити</div>
<div class="t mn" style="left:540px;top:294px;font-size:12.500px;line-height:16px;color:#333639;letter-spacing:0.066px;-webkit-text-stroke:.2px #333639">Формат</div>
<div class="t mn" style="left:598.4px;top:294px;font-size:12.500px;line-height:16px;color:#333639;letter-spacing:0.376px;-webkit-text-stroke:.2px #333639">Дані</div>
<div class="t mn" style="left:638px;top:294px;font-size:12.500px;line-height:16px;color:#333639;letter-spacing:0.234px;-webkit-text-stroke:.2px #333639">Інструменти</div>
<div class="t mn" style="left:725.4px;top:294px;font-size:12.500px;line-height:16px;color:#333639;letter-spacing:0.078px;-webkit-text-stroke:.2px #333639">Розширення</div>
<div class="t mn" style="left:812px;top:294px;font-size:12.500px;line-height:16px;color:#333639;letter-spacing:0.148px;-webkit-text-stroke:.2px #333639">Довідка</div>
<svg class="a" style="left:1323.5px;top:276.5px;" width="20" height="20" viewBox="0 0 20 20"><path d="M4.300 5.500A7.500 7.500 0 1 1 2.500 10" fill="none" stroke="#444746" stroke-width="1.800"/><path d="M.8 2.800l1 5.200 4.800-1.800z" fill="#444746"/><path d="M10 5.500V10l3.200 2.600" fill="none" stroke="#444746" stroke-width="1.800"/></svg>
<svg class="a" style="left:1367.5px;top:279.0px;" width="18" height="18" viewBox="0 0 18 18"><path d="M1 1h16v12.500H1z" fill="none" stroke="#444746" stroke-width="1.800" stroke-linejoin="round"/><path d="M17 12.500V17l-4.500-4z" fill="#444746" stroke="#444746" stroke-width="1" stroke-linejoin="round"/><path d="M4 4.600h10M4 7.200h10M4 9.800h10" stroke="#444746" stroke-width="1.500"/></svg>
<svg class="a" style="left:1414.0px;top:280.5px;" width="19" height="15" viewBox="0 0 19 15"><path d="M5.500 1.200H12a1.800 1.800 0 0 1 1.800 1.800v9a1.800 1.800 0 0 1-1.800 1.800H3A1.800 1.800 0 0 1 1.200 12V5.500z" fill="none" stroke="#444746" stroke-width="1.900" stroke-linejoin="round"/><path d="M14 6l4.200-2.800v8.600L14 9z" fill="#444746"/></svg>
<svg class="a" style="left:1442.0px;top:284.5px;" width="7" height="4" viewBox="0 0 7 4"><path d="M0 0h7L3.500 4z" fill="#444746"/></svg>
<div class="a" style="left:1469px;top:270px;width:129px;height:35px;border-radius:18px;background:#c2e7ff"></div>
<svg class="a" style="left:1484.5px;top:280.0px;" width="15" height="15" viewBox="0 0 15 15"><circle cx="7.500" cy="7.500" r="7" fill="#0b2a44"/><path d="M2 5c2 .3 2.500 1.500 4 1.800 1.200.3 1 1.700 0 2.400-1 .6-.3 2.400-1.300 3.300M9 1.200c-.6 1.300.5 1.800 1.600 2 1.200.3 1 1.600 2.600 1.800" fill="none" stroke="#c2e7ff" stroke-width="1.500"/></svg>
<div class="t" style="left:1507px;top:279px;font-size:12.500px;line-height:16px;color:#0b2a44;font-weight:bold;letter-spacing:-.2px">Поділитися</div>
<svg class="a" style="left:1615.500px;top:273px" width="29" height="29" viewBox="0 0 29 29"><defs><clipPath id="avc"><circle cx="14.500" cy="14.500" r="14.500"/></clipPath></defs><g clip-path="url(#avc)"><rect width="29" height="29" fill="#5b3b27"/><rect x="0" y="0" width="29" height="9" fill="#6e5233"/><circle cx="8" cy="6" r="3" fill="#a88a4a"/><circle cx="22" cy="7" r="3.500" fill="#8c6f3c"/><ellipse cx="14.500" cy="12" rx="5.500" ry="6.500" fill="#d9ac8a"/><path d="M9 8c1-4 10-4 11 0-2-1.500-9-1.500-11 0z" fill="#7a5a3c"/><path d="M0 29v-6c3-4 8-5 14.500-5s11.500 1 14.500 5v6z" fill="#f1eeec"/></g></svg>
<div class="a" style="left:273px;top:319px;width:1371px;height:35px;border-radius:17px;background:#eef2fa"></div>
<svg class="a" style="left:286.5px;top:329.5px;" width="14" height="14" viewBox="0 0 14 14"><circle cx="5.500" cy="5.500" r="4.200" stroke="#444746" fill="none" stroke-width="1.600"/><path d="M8.700 8.700L13 13" stroke="#444746" fill="none" stroke-width="1.800"/></svg>
<svg class="a" style="left:316.5px;top:330.5px;" width="14" height="12" viewBox="0 0 14 12"><path d="M4.500 1L1.500 4l3 3" stroke="#444746" fill="none" stroke-width="1.500"/><path d="M1.800 4h7a3.500 3.500 0 0 1 0 7H5" stroke="#444746" fill="none" stroke-width="1.500"/></svg>
<svg class="a" style="left:343.5px;top:330.5px;" width="14" height="12" viewBox="0 0 14 12"><path d="M9.500 1l3 3-3 3" stroke="#444746" fill="none" stroke-width="1.500"/><path d="M12.200 4h-7a3.500 3.500 0 0 0 0 7H9" stroke="#444746" fill="none" stroke-width="1.500"/></svg>
<svg class="a" style="left:370.5px;top:329.5px;" width="16" height="14" viewBox="0 0 16 14"><path d="M4 4V1h8v3M4 10.500H1.500v-5.500h13v5.500H12" stroke="#444746" fill="none" stroke-width="1.500"/><rect x="4" y="8" width="8" height="5" stroke="#444746" fill="none" stroke-width="1.500"/></svg>
<svg class="a" style="left:398.0px;top:328.5px;" width="14" height="16" viewBox="0 0 14 16"><rect x="1" y="1" width="10.500" height="4" rx="1" stroke="#444746" fill="none" stroke-width="1.500"/><path d="M11.500 3H13v4.500H7V10" stroke="#444746" fill="none" stroke-width="1.400"/><rect x="5.700" y="10" width="2.600" height="5" rx=".8" stroke="#444746" fill="none" stroke-width="1.300"/></svg>
<div class="t" style="left:427px;top:329px;font-size:13px;line-height:16px;color:#444746">100%</div>
<svg class="a" style="left:471.5px;top:334.5px;" width="7" height="4" viewBox="0 0 7 4"><path d="M0 0h7L3.500 4z" fill="#444746"/></svg>
<div class="a" style="left:486px;top:327px;width:1px;height:19px;background:#e3e8f0"></div>
<div class="t" style="left:495px;top:329px;font-size:11.500px;line-height:15px;color:#444746">грн.</div>
<div class="t" style="left:528px;top:328px;font-size:12.500px;line-height:16px;color:#444746">%</div>
<div class="t" style="left:551px;top:328px;font-size:10.500px;line-height:14px;color:#444746;font-weight:bold;letter-spacing:-.3px">.0</div>
<svg class="a" style="left:559.0px;top:339.5px;" width="8" height="5" viewBox="0 0 8 5"><path d="M8 2.500H1.500M3.500 .5l-2 2 2 2" stroke="#444746" fill="none" stroke-width="1.200"/></svg>
<div class="t" style="left:579px;top:328px;font-size:10.500px;line-height:14px;color:#444746;font-weight:bold;letter-spacing:-.3px">.00</div>
<svg class="a" style="left:587.0px;top:339.5px;" width="8" height="5" viewBox="0 0 8 5"><path d="M0 2.500h6.500M4.500 .5l2 2-2 2" stroke="#444746" fill="none" stroke-width="1.200"/></svg>
<div class="t" style="left:609px;top:330px;font-size:10px;line-height:14px;color:#444746;letter-spacing:-.2px">123</div>
<div class="a" style="left:636px;top:327px;width:1px;height:19px;background:#e3e8f0"></div>
<div class="t" style="left:648px;top:329px;font-size:12.500px;line-height:16px;color:#444746">Monts...</div>
<svg class="a" style="left:706.5px;top:334.5px;" width="7" height="4" viewBox="0 0 7 4"><path d="M0 0h7L3.500 4z" fill="#444746"/></svg>
<div class="a" style="left:725px;top:327px;width:1px;height:19px;background:#e3e8f0"></div>
<svg class="a" style="left:735.5px;top:335.5px;" width="10" height="2" viewBox="0 0 10 2"><path d="M0 1h10" stroke="#444746" fill="none" stroke-width="1.500"/></svg>
<div class="a" style="left:754px;top:325px;width:30px;height:21px;border:1px solid #747775;border-radius:4px"></div>
<div class="t" style="left:754px;width:30px;text-align:center;top:328px;font-size:12.500px;line-height:16px;color:#444746">10</div>
<svg class="a" style="left:791.5px;top:331.5px;" width="10" height="10" viewBox="0 0 10 10"><path d="M0 5h10M5 0v10" stroke="#444746" fill="none" stroke-width="1.500"/></svg>
<div class="a" style="left:806px;top:327px;width:1px;height:19px;background:#e3e8f0"></div>
<div class="a" style="left:815px;top:323px;width:25px;height:26px;border-radius:4px;background:#d3e3fd"></div>
<div class="t" style="left:822px;top:328px;font-size:13px;line-height:17px;color:#0b2a5a;font-weight:bold">B</div>
<div class="t" style="left:851px;top:328px;font-size:13.500px;line-height:17px;color:#444746;font-style:italic;font-weight:bold;font-family:'Liberation Serif',serif">I</div>
<svg class="a" style="left:875.5px;top:330.5px;" width="14" height="12" viewBox="0 0 14 12"><path d="M0 6h14" stroke="#444746" fill="none" stroke-width="1.400"/><path d="M10.500 3.200C10 1.800 8.700 1 7 1 5 1 3.700 2 3.700 3.400M3.500 8.800C4 10.200 5.300 11 7 11c2 0 3.300-1 3.300-2.400" stroke="#444746" fill="none" stroke-width="1.500"/></svg>
<div class="t" style="left:906px;top:326px;font-size:12px;line-height:15px;color:#444746">A</div>
<div class="a" style="left:901px;top:342px;width:20px;height:3px;background:#111"></div>
<div class="a" style="left:928px;top:327px;width:1px;height:19px;background:#e3e8f0"></div>
<svg class="a" style="left:937.0px;top:327.5px;" width="16" height="15" viewBox="0 0 16 15"><path d="M2.500 1l6.500 6.500-4.200 4.200a1 1 0 0 1-1.400 0L.8 9.100a1 1 0 0 1 0-1.400L5 3.500" stroke="#444746" fill="none" stroke-width="1.500"/><path d="M1 8.500h7" stroke="#444746" fill="none" stroke-width="1.300"/><path d="M12.500 9.500c1 1.400 1.500 2.200 1.500 2.900a1.500 1.500 0 0 1-3 0c0-.7.500-1.500 1.500-2.900z" fill="#444746"/></svg>
<svg class="a" style="left:968.0px;top:329.5px;" width="14" height="14" viewBox="0 0 14 14"><rect x=".8" y=".8" width="12.400" height="12.400" stroke="#444746" fill="none" stroke-width="1.500"/><path d="M7 .8v12.400M.8 7h12.400" stroke="#444746" fill="none" stroke-width="1.500"/></svg>
<svg class="a" style="left:996.0px;top:329.5px;" width="14" height="14" viewBox="0 0 14 14"><path d="M1 4.500V1h3.500M9.500 1H13v3.500M1 9.500V13h3.500M9.500 13H13V9.500M3 7h2.500M8.500 7H11" fill="none" stroke="#b4b8bd" stroke-width="1.400"/></svg>
<svg class="a" style="left:1017.5px;top:334.5px;" width="7" height="4" viewBox="0 0 7 4"><path d="M0 0h7L3.500 4z" fill="#c4c7cc"/></svg>
<div class="a" style="left:1030px;top:327px;width:1px;height:19px;background:#e3e8f0"></div>
<svg class="a" style="left:1038.5px;top:330.5px;" width="13" height="12" viewBox="0 0 13 12"><path d="M0 1h13M0 4.300h8.500M0 7.700h13M0 11h8.500" stroke="#444746" fill="none" stroke-width="1.400"/></svg>
<svg class="a" style="left:1058.0px;top:334.5px;" width="7" height="4" viewBox="0 0 7 4"><path d="M0 0h7L3.500 4z" fill="#444746"/></svg>
<svg class="a" style="left:1074.5px;top:330.0px;" width="12" height="13" viewBox="0 0 12 13"><path d="M6 0v8.500M2.500 5.500L6 9l3.500-3.500M0.500 12h11" stroke="#444746" fill="none" stroke-width="1.400"/></svg>
<svg class="a" style="left:1093.0px;top:334.5px;" width="7" height="4" viewBox="0 0 7 4"><path d="M0 0h7L3.500 4z" fill="#444746"/></svg>
<svg class="a" style="left:1110.0px;top:330.5px;" width="12" height="12" viewBox="0 0 12 12"><path d="M1 0v12M11 0v12M3 6h6M7 4l2 2-2 2" stroke="#444746" fill="none" stroke-width="1.400"/></svg>
<svg class="a" style="left:1128.0px;top:334.5px;" width="7" height="4" viewBox="0 0 7 4"><path d="M0 0h7L3.500 4z" fill="#444746"/></svg>
<div class="t" style="left:1146px;top:327px;font-size:12px;line-height:15px;color:#444746">A</div>
<svg class="a" style="left:1145.5px;top:341.5px;" width="13" height="4" viewBox="0 0 13 4"><path d="M0 2.500h11.500M9.500 .5l2 2-2 1.500" stroke="#444746" fill="none" stroke-width="1.200"/></svg>
<svg class="a" style="left:1164.0px;top:334.5px;" width="7" height="4" viewBox="0 0 7 4"><path d="M0 0h7L3.500 4z" fill="#444746"/></svg>
<div class="a" style="left:1178px;top:327px;width:1px;height:19px;background:#e3e8f0"></div>
<svg class="a" style="left:1186.0px;top:332.5px;" width="16" height="8" viewBox="0 0 16 8"><path d="M6.500 1H4a3 3 0 0 0 0 6h2.500M9.500 1H12a3 3 0 0 1 0 6H9.500M5 4h6" stroke="#444746" fill="none" stroke-width="1.500"/></svg>
<svg class="a" style="left:1214.5px;top:329.5px;" width="15" height="15" viewBox="0 0 15 15"><path d="M1.500 1h12a.8.800 0 0 1 .8.800v8.400a.8.800 0 0 1-.8.800H5l-3.500 3z" stroke="#444746" fill="none" stroke-width="1.400"/><path d="M7.500 3.500v5M5 6h5" stroke="#444746" fill="none" stroke-width="1.400"/></svg>
<svg class="a" style="left:1242.5px;top:329.5px;" width="14" height="14" viewBox="0 0 14 14"><rect x=".8" y=".8" width="12.400" height="12.400" rx="1.500" stroke="#444746" fill="none" stroke-width="1.400"/><path d="M4.200 10V6M7 10V4M9.800 10V8" stroke="#444746" fill="none" stroke-width="1.400"/></svg>
<svg class="a" style="left:1271.0px;top:330.5px;" width="12" height="12" viewBox="0 0 12 12"><path d="M.8 1h10.400L7.200 6.200v4.800H4.800V6.200z" stroke="#444746" fill="none" stroke-width="1.500" stroke-linejoin="round"/></svg>
<svg class="a" style="left:1294.5px;top:329.0px;" width="15" height="15" viewBox="0 0 15 15"><path d="M3.500 3.500V1.200h10.300v9H11.500" stroke="#444746" fill="none" stroke-width="1.300"/><rect x="1" y="3.800" width="10.500" height="10" rx="1" stroke="#444746" fill="none" stroke-width="1.400"/><path d="M1 7h10.500M1 10.300h10.500M4.500 7v6.800M8 7v6.800" stroke="#444746" fill="none" stroke-width="1.100"/></svg>
<svg class="a" style="left:1315.0px;top:334.5px;" width="7" height="4" viewBox="0 0 7 4"><path d="M0 0h7L3.500 4z" fill="#444746"/></svg>
<div class="t" style="left:1334px;top:327px;font-size:15px;line-height:18px;color:#444746;font-weight:bold">Σ</div>
<div class="a" style="left:1358px;top:327px;width:1px;height:19px;background:#e3e8f0"></div>
<div class="t" style="left:1367px;top:327px;font-size:14px;line-height:18px;color:#1f1f1f;font-weight:bold;letter-spacing:-.5px">У<span style="font-size:10.500px">к</span></div>
<svg class="a" style="left:1389.0px;top:334.5px;" width="7" height="4" viewBox="0 0 7 4"><path d="M0 0h7L3.500 4z" fill="#444746"/></svg>
<svg class="a" style="left:1618.0px;top:333.5px;" width="10" height="6" viewBox="0 0 10 6"><path d="M1 5l4-4 4 4" stroke="#444746" fill="none" stroke-width="1.600"/></svg>
<div class="t" style="left:268.500px;top:365px;font-size:11px;line-height:15px;color:#202124;letter-spacing:-.45px">B18</div>
<svg class="a" style="left:331.5px;top:370.5px;" width="7" height="4" viewBox="0 0 7 4"><path d="M0 0h7L3.500 4z" fill="#444746"/></svg>
<div class="a" style="left:349px;top:364px;width:1px;height:17px;background:#dadce0"></div>
<div class="t" style="left:359px;top:364px;font-size:12px;line-height:16px;color:#8a8d91;font-style:italic;font-family:'Liberation Serif',serif">fx</div>
<div class="t" style="left:380px;top:365px;font-size:10.500px;line-height:15px;color:#3c4043;letter-spacing:.16px">Менеджер з продажу, керівник, HR, бухгалтер</div>
<div class="a" style="left:256px;top:385px;width:1406px;height:494px;overflow:hidden;background:#fff">
<div class="a" style="left:0;top:0;width:1395px;height:21px;background:#fff;border-top:1px solid #e4e4e4;border-bottom:1px solid #d6d6d6"></div>
<div class="a" style="left:0;top:0;width:40px;height:494px;background:#fbfbfc"></div>
<div class="a" style="left:0;top:0;width:40px;height:21px;background:#f6f6f8;border-bottom:1px solid #d4d4d8"></div>
<div class="a" style="left:208px;top:1px;width:168px;height:20px;background:#d3e3fd"></div>
<div class="a" style="left:40px;top:43.5px;width:168px;height:97.0px;background:#76a5af"></div>
<div class="a" style="left:208px;top:43.5px;width:168px;height:97.0px;background:#d0e0e3"></div>
<div class="a" style="left:40px;top:210.5px;width:336px;height:32.5px;background:#fff2cc"></div>
<div class="a" style="left:0px;top:210.5px;width:40px;height:32.5px;background:#d3e3fd"></div>
<div class="a" style="left:0;top:39.0px;width:1395px;height:1px;background:#e4e4e4"></div>
<div class="a" style="left:0;top:74.5px;width:1395px;height:1px;background:#e4e4e4"></div>
<div class="a" style="left:0;top:121.0px;width:1395px;height:1px;background:#e4e4e4"></div>
<div class="a" style="left:0;top:140.0px;width:1395px;height:1px;background:#e4e4e4"></div>
<div class="a" style="left:0;top:159.0px;width:1395px;height:1px;background:#e4e4e4"></div>
<div class="a" style="left:0;top:191.5px;width:1395px;height:1px;background:#e4e4e4"></div>
<div class="a" style="left:0;top:210.0px;width:1395px;height:1px;background:#e4e4e4"></div>
<div class="a" style="left:0;top:242.5px;width:1395px;height:1px;background:#e4e4e4"></div>
<div class="a" style="left:0;top:261.0px;width:1395px;height:1px;background:#e4e4e4"></div>
<div class="a" style="left:0;top:280.0px;width:1395px;height:1px;background:#e4e4e4"></div>
<div class="a" style="left:0;top:298.7px;width:1395px;height:1px;background:#e4e4e4"></div>
<div class="a" style="left:0;top:317.5px;width:1395px;height:1px;background:#e4e4e4"></div>
<div class="a" style="left:0;top:336.2px;width:1395px;height:1px;background:#e4e4e4"></div>
<div class="a" style="left:0;top:354.9px;width:1395px;height:1px;background:#e4e4e4"></div>
<div class="a" style="left:0;top:373.7px;width:1395px;height:1px;background:#e4e4e4"></div>
<div class="a" style="left:0;top:392.4px;width:1395px;height:1px;background:#e4e4e4"></div>
<div class="a" style="left:0;top:411.1px;width:1395px;height:1px;background:#e4e4e4"></div>
<div class="a" style="left:0;top:429.8px;width:1395px;height:1px;background:#e4e4e4"></div>
<div class="a" style="left:0;top:448.6px;width:1395px;height:1px;background:#e4e4e4"></div>
<div class="a" style="left:0;top:467.3px;width:1395px;height:1px;background:#e4e4e4"></div>
<div class="a" style="left:0;top:486.0px;width:1395px;height:1px;background:#e4e4e4"></div>
<div class="a" style="left:0;top:493.5px;width:1395px;height:1px;background:#e4e4e4"></div>
<div class="a" style="left:0;top:39.0px;width:40px;height:1px;background:#d9d9de"></div>
<div class="a" style="left:0;top:74.5px;width:40px;height:1px;background:#d9d9de"></div>
<div class="a" style="left:0;top:121.0px;width:40px;height:1px;background:#d9d9de"></div>
<div class="a" style="left:0;top:140.0px;width:40px;height:1px;background:#d9d9de"></div>
<div class="a" style="left:0;top:159.0px;width:40px;height:1px;background:#d9d9de"></div>
<div class="a" style="left:0;top:191.5px;width:40px;height:1px;background:#d9d9de"></div>
<div class="a" style="left:0;top:210.0px;width:40px;height:1px;background:#d9d9de"></div>
<div class="a" style="left:0;top:242.5px;width:40px;height:1px;background:#d9d9de"></div>
<div class="a" style="left:0;top:261.0px;width:40px;height:1px;background:#d9d9de"></div>
<div class="a" style="left:0;top:280.0px;width:40px;height:1px;background:#d9d9de"></div>
<div class="a" style="left:0;top:298.7px;width:40px;height:1px;background:#d9d9de"></div>
<div class="a" style="left:0;top:317.5px;width:40px;height:1px;background:#d9d9de"></div>
<div class="a" style="left:0;top:336.2px;width:40px;height:1px;background:#d9d9de"></div>
<div class="a" style="left:0;top:354.9px;width:40px;height:1px;background:#d9d9de"></div>
<div class="a" style="left:0;top:373.7px;width:40px;height:1px;background:#d9d9de"></div>
<div class="a" style="left:0;top:392.4px;width:40px;height:1px;background:#d9d9de"></div>
<div class="a" style="left:0;top:411.1px;width:40px;height:1px;background:#d9d9de"></div>
<div class="a" style="left:0;top:429.8px;width:40px;height:1px;background:#d9d9de"></div>
<div class="a" style="left:0;top:448.6px;width:40px;height:1px;background:#d9d9de"></div>
<div class="a" style="left:0;top:467.3px;width:40px;height:1px;background:#d9d9de"></div>
<div class="a" style="left:0;top:486.0px;width:40px;height:1px;background:#d9d9de"></div>
<div class="a" style="left:0;top:493.5px;width:40px;height:1px;background:#d9d9de"></div>
<div class="a" style="left:40px;top:74.5px;width:168px;height:1px;background:#7aa9b2"></div>
<div class="a" style="left:208px;top:74.5px;width:168px;height:1px;background:#c9dade"></div>
<div class="a" style="left:40px;top:121.0px;width:168px;height:1px;background:#7aa9b2"></div>
<div class="a" style="left:208px;top:121.0px;width:168px;height:1px;background:#c9dade"></div>
<div class="a" style="left:39.5px;top:0;width:1px;height:494px;background:#e4e4e4"></div>
<div class="a" style="left:207.5px;top:0;width:1px;height:494px;background:#e4e4e4"></div>
<div class="a" style="left:851.5px;top:0;width:1px;height:494px;background:#e4e4e4"></div>
<div class="a" style="left:1202.5px;top:0;width:1px;height:494px;background:#e4e4e4"></div>
<div class="a" style="left:1394.5px;top:0;width:1px;height:494px;background:#e4e4e4"></div>
<div class="a" style="left:39.5px;top:43.5px;width:1.0px;height:97.0px;background:#76a5af"></div>
<div class="a" style="left:0;top:39.5px;width:1395px;height:4px;background:#c6c6c6"></div>
<div class="a" style="left:376px;top:0;width:4px;height:494px;background:#c6c6c6"></div>
<div class="a" style="left:376px;top:0;width:4px;height:21px;background:#bcc3d0"></div>
<div class="a" style="left:1395.5px;top:0;width:11px;height:494px;background:#fafafa"></div>
<div class="a" style="left:1397px;top:71px;width:7px;height:23px;border-radius:4px;background:#d4d4d4"></div>
</div>
<div class="t" style="left:360px;width:40px;text-align:center;top:389px;font-size:10px;line-height:13px;color:#5a5d61;">A</div>
<div class="t" style="left:528px;width:40px;text-align:center;top:389px;font-size:10px;line-height:13px;color:#0b2a5a;font-weight:bold;">B</div>
<div class="t" style="left:852px;width:40px;text-align:center;top:389px;font-size:10px;line-height:13px;color:#5a5d61;">C</div>
<div class="t" style="left:1264px;width:40px;text-align:center;top:389px;font-size:10px;line-height:13px;color:#5a5d61;">D</div>
<div class="t" style="left:1584px;width:40px;text-align:center;top:389px;font-size:10px;line-height:13px;color:#5a5d61;">E</div>
<div class="t" style="left:256px;width:40px;text-align:center;top:408.8px;font-size:9.500px;line-height:13px;color:#5a5d61;">1</div>
<div class="t" style="left:256px;width:40px;text-align:center;top:437.8px;font-size:9.500px;line-height:13px;color:#5a5d61;">12</div>
<div class="t" style="left:256px;width:40px;text-align:center;top:476.8px;font-size:9.500px;line-height:13px;color:#5a5d61;">13</div>
<div class="t" style="left:256px;width:40px;text-align:center;top:509.5px;font-size:9.500px;line-height:13px;color:#5a5d61;">14</div>
<div class="t" style="left:256px;width:40px;text-align:center;top:528.5px;font-size:9.500px;line-height:13px;color:#5a5d61;">15</div>
<div class="t" style="left:256px;width:40px;text-align:center;top:554.2px;font-size:9.500px;line-height:13px;color:#5a5d61;">16</div>
<div class="t" style="left:256px;width:40px;text-align:center;top:579.8px;font-size:9.500px;line-height:13px;color:#5a5d61;">17</div>
<div class="t" style="left:256px;width:40px;text-align:center;top:605.2px;font-size:9.500px;line-height:13px;color:#0b2a5a;font-weight:bold;">18</div>
<div class="t" style="left:256px;width:40px;text-align:center;top:630.8px;font-size:9.500px;line-height:13px;color:#5a5d61;">19</div>
<div class="t" style="left:256px;width:40px;text-align:center;top:649.5px;font-size:9.500px;line-height:13px;color:#5a5d61;">20</div>
<div class="t" style="left:256px;width:40px;text-align:center;top:668.4px;font-size:9.500px;line-height:13px;color:#5a5d61;">21</div>
<div class="t" style="left:256px;width:40px;text-align:center;top:687.1px;font-size:9.500px;line-height:13px;color:#5a5d61;">22</div>
<div class="t" style="left:256px;width:40px;text-align:center;top:705.8px;font-size:9.500px;line-height:13px;color:#5a5d61;">23</div>
<div class="t" style="left:256px;width:40px;text-align:center;top:724.6px;font-size:9.500px;line-height:13px;color:#5a5d61;">24</div>
<div class="t" style="left:256px;width:40px;text-align:center;top:743.3px;font-size:9.500px;line-height:13px;color:#5a5d61;">25</div>
<div class="t" style="left:256px;width:40px;text-align:center;top:762.0px;font-size:9.500px;line-height:13px;color:#5a5d61;">26</div>
<div class="t" style="left:256px;width:40px;text-align:center;top:780.7px;font-size:9.500px;line-height:13px;color:#5a5d61;">27</div>
<div class="t" style="left:256px;width:40px;text-align:center;top:799.5px;font-size:9.500px;line-height:13px;color:#5a5d61;">28</div>
<div class="t" style="left:256px;width:40px;text-align:center;top:818.2px;font-size:9.500px;line-height:13px;color:#5a5d61;">29</div>
<div class="t" style="left:256px;width:40px;text-align:center;top:836.9px;font-size:9.500px;line-height:13px;color:#5a5d61;">30</div>
<div class="t" style="left:256px;width:40px;text-align:center;top:855.7px;font-size:9.500px;line-height:13px;color:#5a5d61;">31</div>
<div class="a" style="left:256px;top:872px;width:40px;height:7px;overflow:hidden"><div class="t" style="left:0;width:40px;text-align:center;top:1.500px;font-size:9.500px;line-height:13px;color:#5a5d61">32</div></div>
<div class="t c" style="left:299px;top:409.2px;font-size:10.75px;line-height:16px;color:#111;font-weight:bold;letter-spacing:0.313px;">Блок</div>
<div class="t c" style="left:467px;top:409.2px;font-size:10.75px;line-height:16px;color:#111;font-weight:bold;letter-spacing:0.257px;">Критерій</div>
<div class="t c" style="left:639px;top:409.2px;font-size:10.75px;line-height:16px;color:#111;font-weight:bold;letter-spacing:0.122px;">Perfectum CRM+ERP</div>
<div class="t c" style="left:1111px;top:409.2px;font-size:10.75px;line-height:16px;color:#111;font-weight:bold;letter-spacing:0.163px;">Pipedrive</div>
<div class="t c" style="left:1462px;top:409.2px;font-size:10.75px;line-height:16px;color:#111;font-weight:bold;letter-spacing:0.207px;">Keepin</div>
<div class="t c" style="left:299px;top:444.5px;font-size:11.25px;line-height:16px;color:#24525c;letter-spacing:0.213px;">HR можливості</div>
<div class="t c" style="left:467px;top:444.5px;font-size:11.25px;line-height:16px;color:#4f6166;letter-spacing:0.198px;width:165px;overflow:hidden;">Функціонал для HR спеціа.</div>
<div class="t c" style="left:639px;top:430.5px;font-size:11.25px;line-height:16px;color:#3e3e3e;letter-spacing:0.090px;">Пошук нових кадрів, плани та планування наавнтаження на команду,</div>
<div class="t c" style="left:639px;top:444.5px;font-size:11.25px;line-height:16px;color:#3e3e3e;letter-spacing:0.074px;">структура компанії</div>
<div class="t c" style="left:1111px;top:444.5px;font-size:11.25px;line-height:16px;color:#3e3e3e;letter-spacing:0.161px;">Тільки групування по відділам команду</div>
<div class="t c" style="left:1462px;top:444.5px;font-size:11.25px;line-height:16px;color:#e2374d;letter-spacing:0.613px;">Немає</div>
<div class="t c" style="left:299px;top:491.5px;font-size:11.25px;line-height:16px;color:#24525c;letter-spacing:0.069px;">Бухгалтерські можливості</div>
<div class="t c" style="left:467px;top:491.5px;font-size:11.25px;line-height:16px;color:#4f6166;letter-spacing:0.081px;width:165px;overflow:hidden;">Функціонал для бухгалтері</div>
<div class="t c" style="left:639px;top:463.5px;font-size:11.25px;line-height:16px;color:#3e3e3e;letter-spacing:0.113px;">Інтеграція з сервісом Vchasno (Вчасно). Дає можливість підписувати та</div>
<div class="t c" style="left:639px;top:477.5px;font-size:11.25px;line-height:16px;color:#3e3e3e;letter-spacing:0.058px;">автоматично змінювати статус документів. Також зберігати цю інформацію</div>
<div class="t c" style="left:639px;top:491.5px;font-size:11.25px;line-height:16px;color:#3e3e3e;letter-spacing:0.004px;">на рівни карти клієнта.</div>
<div class="t c" style="left:1111px;top:477.5px;font-size:11.25px;line-height:16px;color:#e2374d;letter-spacing:0.062px;">Готових рішень немає, тільки під запит на реалізацію</div>
<div class="t c" style="left:1111px;top:491.5px;font-size:11.25px;line-height:16px;color:#e2374d;letter-spacing:0.144px;">програмістам.</div>
<div class="t c" style="left:1462px;top:491.5px;font-size:11.25px;line-height:16px;color:#3e3e3e;letter-spacing:0.328px;">Виписки з Моно, Приват банк</div>
<div class="t c" style="left:299px;top:510.0px;font-size:11.25px;line-height:16px;color:#24525c;letter-spacing:0.210px;width:165px;overflow:hidden;">Можливості для керівника</div>
<div class="t c" style="left:467px;top:510.0px;font-size:11.25px;line-height:16px;color:#4f6166;letter-spacing:0.189px;">Функціонал для керівника</div>
<div class="t c" style="left:639px;top:510.0px;font-size:11.25px;line-height:16px;color:#3e3e3e;letter-spacing:0.096px;">Аналітика, плани продажів</div>
<div class="t c" style="left:1111px;top:510.0px;font-size:11.25px;line-height:16px;color:#3e3e3e;letter-spacing:0.096px;">Аналітика, плани продажів</div>
<div class="t c" style="left:1462px;top:510.0px;font-size:11.25px;line-height:16px;color:#3e3e3e;width:188.5px;overflow:hidden;letter-spacing:.2px;">Аналітика по продажам, P&amp;L зв</div>
<div class="t c" style="left:299px;top:560.7px;font-size:10.75px;line-height:16px;color:#111;font-weight:bold;letter-spacing:0.114px;">Вартість ліцензії</div>
<div class="t c" style="left:1111px;top:546.5px;font-size:11.25px;line-height:16px;color:#3e3e3e;letter-spacing:-0.061px;">49 евро/користувач + 380 грн Sendpuls + 90$ Leadbox + 1</div>
<div class="t c" style="left:1111px;top:560.5px;font-size:11.25px;line-height:16px;color:#3e3e3e;letter-spacing:0.133px;">кабінет 300 грн/ міс Нова Пошта</div>
<div class="t c" style="left:1462px;top:560.5px;font-size:11.25px;line-height:16px;color:#3e3e3e;letter-spacing:0.170px;">300 грн/користувач</div>
<div class="t c" style="left:299px;top:612.2px;font-size:10.75px;line-height:16px;color:#111;font-weight:bold;letter-spacing:0.153px;">Хто має бути в системі</div>
<div class="t c" style="left:467px;top:598.2px;font-size:10.75px;line-height:16px;color:#111;font-weight:bold;letter-spacing:0.051px;">Менеджер з продажу,</div>
<div class="t c" style="left:467px;top:612.2px;font-size:10.75px;line-height:16px;color:#111;font-weight:bold;letter-spacing:0.063px;">керівник, HR, бухгалтер</div>
<div class="a" style="left:463.500px;top:595px;width:169px;height:34px;border:2px solid #1a6ee0"></div>
<div class="a" style="left:628.500px;top:624.500px;width:8px;height:8px;border-radius:50%;background:#1a6ee0;border:1px solid #fff"></div>
<svg class="a" style="left:558px;top:552px" width="16" height="24" viewBox="0 0 16 24"><path d="M2 1.500v17.500l4.200-3.800 2.800 6.600 2.900-1.300-2.800-6.400 5.600-.3z" fill="#111" stroke="#fff" stroke-width="1.500" stroke-linejoin="round"/></svg>
<div class="a" style="left:256px;top:879px;width:1406px;height:40px;background:#fafbfc;border-radius:0 0 9px 9px"></div>
<div class="a" style="left:636px;top:879px;width:1015px;height:11px;background:#fcfcfc"></div>
<div class="a" style="left:638px;top:881px;width:315px;height:7px;border-radius:4px;background:#d9d9d9"></div>
<div class="a" style="left:632px;top:879px;width:4px;height:9px;background:#d2d2d2"></div>
<div class="a" style="left:372px;top:889px;width:84px;height:30px;background:#e1e9f7"></div>
<div class="t" style="left:382.500px;top:898px;font-size:13px;line-height:16px;color:#1a56c4;font-weight:bold;letter-spacing:-0.188px">Аркуш1</div>
<svg class="a" style="left:439.500px;top:904px" width="8" height="5" viewBox="0 0 8 5"><path d="M0 0h8L4 4.500z" fill="#1a56c4"/></svg>
<svg class="a" style="left:304px;top:900.500px" width="11" height="11" viewBox="0 0 11 11"><path d="M5.500 0v11M0 5.500h11" stroke="#444746" stroke-width="1.600"/></svg>
<svg class="a" style="left:338px;top:901px" width="13" height="10" viewBox="0 0 13 10"><path d="M0 1h13M0 5h13M0 9h13" stroke="#444746" stroke-width="1.500"/></svg>
<svg class="a" style="left:1632px;top:902px" width="8" height="11" viewBox="0 0 8 11"><path d="M6.500 1L2 5.500 6.500 10" fill="none" stroke="#444746" stroke-width="1.600"/></svg>
<svg class="a" style="left:1627px;top:880px" width="20" height="7" viewBox="0 0 20 7"><path d="M4.500 1v5L1.500 3.500zM16 1v5l3-2.500z" fill="#8a8a8a"/></svg>
<svg class="a" style="left:1653px;top:854px" width="7" height="20" viewBox="0 0 7 20"><path d="M1 4.500h5L3.500 1.500zM1 16h5l-2.500 3z" fill="#8a8a8a"/><path d="M1.500 10.500h4" stroke="#aaa" stroke-width="1"/></svg>
<div class="a" style="left:1661px;top:140px;width:1px;height:772px;background:#f6e3f3"></div>
<div class="a" style="left:1662px;top:132px;width:2px;height:787px;background:linear-gradient(180deg,#d85a9a 0,#b6608f 7%,#a8528c 30%,#94458a 56%,#6f2a98 80%,#5a12a8 100%)"></div>
<svg class="a" style="left:42px;top:924px" width="34" height="34" viewBox="0 0 34 34"><rect x="11" y="3" width="11" height="18" rx="5.500" fill="#b4b4b4"/><path d="M7.500 15a9 9 0 0 0 18 0" fill="none" stroke="#b4b4b4" stroke-width="1.800"/><path d="M16.500 24v5.500M12 30h9" stroke="#b4b4b4" stroke-width="1.800"/><path d="M2 31L30.500 2.500" stroke="#1b1b1b" stroke-width="4.500"/><path d="M2 31L30.500 2.500" stroke="#f0545e" stroke-width="1.900"/></svg>
<svg class="a" style="left:91px;top:937px" width="12" height="8" viewBox="0 0 12 8"><path d="M1.500 6.500L6 2l4.500 4.500" fill="none" stroke="#d0d0d0" stroke-width="1.800"/></svg>
<div class="zl" style="left:-22.200000000000003px;width:160px;top:962px;color:#c9c9c9;letter-spacing:0.163px;"><span style="margin-right:-0.163px">Unmute</span></div>
<svg class="a" style="left:157px;top:924px" width="34" height="34" viewBox="0 0 34 34"><rect x="2" y="8" width="21" height="18.500" rx="4" fill="#b4b4b4"/><path d="M24 14.500l7.500-5v15l-7.500-5z" fill="#b4b4b4" stroke="#b4b4b4" stroke-width="1.500" stroke-linejoin="round"/><path d="M2.500 31L31.500 2.500" stroke="#1b1b1b" stroke-width="4.500"/><path d="M2.500 31L31.500 2.500" stroke="#f0545e" stroke-width="1.900"/></svg>
<svg class="a" style="left:214px;top:937px" width="12" height="8" viewBox="0 0 12 8"><path d="M1.500 6.500L6 2l4.500 4.500" fill="none" stroke="#d0d0d0" stroke-width="1.800"/></svg>
<div class="zl" style="left:94px;width:160px;top:962px;color:#c9c9c9;letter-spacing:0.097px;"><span style="margin-right:-0.097px">Start Video</span></div>
<svg class="a" style="left:730px;top:929px" width="32" height="24" viewBox="0 0 32 24"><circle cx="10.500" cy="6.500" r="5" fill="#b4b4b4"/><path d="M1 22.500v-3c0-4 4.500-6 9.500-6s9.500 2 9.500 6v3z" fill="#b4b4b4"/><circle cx="22" cy="7.500" r="4.200" fill="#b4b4b4"/><path d="M22 13.500c4.500 0 8.500 1.800 8.500 5.500v3.500h-8.500v-3c0-2.500-1-4.500-3-5.700 1-.2 2-.3 3-.3z" fill="#b4b4b4"/></svg>
<div class="t" style="left:767px;top:930px;font-size:15px;line-height:18px;color:#d0d0d0">25</div>
<svg class="a" style="left:806px;top:937px" width="12" height="8" viewBox="0 0 12 8"><path d="M1.500 6.500L6 2l4.500 4.500" fill="none" stroke="#d0d0d0" stroke-width="1.800"/></svg>
<div class="zl" style="left:666px;width:160px;top:962px;color:#c9c9c9;letter-spacing:0.094px;"><span style="margin-right:-0.094px">Participants</span></div>
<svg class="a" style="left:871px;top:929px" width="27" height="24" viewBox="0 0 27 24"><path d="M4 1h17a3.500 3.500 0 0 1 3.500 3.500v8A3.500 3.500 0 0 1 21 16H12l-5.500 6.500V16H4A3.500 3.500 0 0 1 .5 12.500v-8A3.500 3.500 0 0 1 4 1z" fill="#b4b4b4"/></svg>
<div class="a" style="left:888px;top:922px;width:20px;height:19px;border-radius:6px;background:#f13b3e;border:1.500px solid #1b1b1b"></div>
<div class="t" style="left:888px;width:20px;text-align:center;top:923px;font-size:14px;line-height:17px;color:#fff;font-weight:bold">1</div>
<svg class="a" style="left:919px;top:937px" width="12" height="8" viewBox="0 0 12 8"><path d="M1.500 6.500L6 2l4.500 4.500" fill="none" stroke="#d0d0d0" stroke-width="1.800"/></svg>
<div class="zl" style="left:804.5px;width:160px;top:962px;color:#c9c9c9;letter-spacing:-0.171px;"><span style="margin-right:0.171px">Chat</span></div>
<div class="a" style="left:987px;top:930px;width:30px;height:22px;border-radius:4px;background:#23d959"></div>
<svg class="a" style="left:995px;top:934px" width="14" height="14" viewBox="0 0 14 14"><path d="M7 13V2.500M2.500 6.500L7 2l4.500 4.500" fill="none" stroke="#10240f" stroke-width="2.200"/></svg>
<div class="zl" style="left:922.5px;width:160px;top:962px;color:#23d959;letter-spacing:-0.268px;"><span style="margin-right:0.268px">Share Screen</span></div>
<svg class="a" style="left:1101px;top:928px" width="26" height="26" viewBox="0 0 26 26"><circle cx="13" cy="13" r="11.800" fill="none" stroke="#b4b4b4" stroke-width="1.700"/><circle cx="13" cy="13" r="8.800" fill="#b4b4b4"/></svg>
<div class="zl" style="left:1034px;width:160px;top:962px;color:#c9c9c9;letter-spacing:-0.142px;"><span style="margin-right:0.142px">Record</span></div>
<svg class="a" style="left:1201px;top:925px" width="30" height="30" viewBox="0 0 30 30"><circle cx="13" cy="17" r="11" fill="#b4b4b4"/><circle cx="23.500" cy="6" r="7" fill="#1b1b1b"/><path d="M23.500 2v8M19.500 6h8" stroke="#b4b4b4" stroke-width="1.600"/><circle cx="9.500" cy="14.500" r="1.500" fill="#1b1b1b"/><circle cx="16.500" cy="14.500" r="1.500" fill="#1b1b1b"/><path d="M8 19.500a5.500 5.500 0 0 0 10 0" fill="none" stroke="#1b1b1b" stroke-width="1.700"/></svg>
<div class="zl" style="left:1133.7px;width:160px;top:962px;color:#c9c9c9;letter-spacing:-0.189px;"><span style="margin-right:0.189px">Reactions</span></div>
<svg class="a" style="left:1303px;top:931px" width="22" height="22" viewBox="0 0 22 22"><g fill="none" stroke="#b4b4b4" stroke-width="1.800"><path d="M2 9V5a3 3 0 0 1 3-3h5"/><path d="M20 13v4a3 3 0 0 1-3 3h-5"/><circle cx="17" cy="5" r="2.600"/><circle cx="5" cy="17" r="2.600"/></g></svg>
<div class="zl" style="left:1234.4px;width:160px;top:962px;color:#c9c9c9;letter-spacing:-0.297px;"><span style="margin-right:0.297px">Apps</span></div>
<div class="a" style="left:1828px;top:935px;width:77px;height:34px;border-radius:9px;background:#c52825"></div>
<div class="t" style="left:1846.500px;top:942px;font-size:15px;line-height:18px;color:#fff;font-weight:bold;letter-spacing:-0.706px">Leave</div>
</body></html>
